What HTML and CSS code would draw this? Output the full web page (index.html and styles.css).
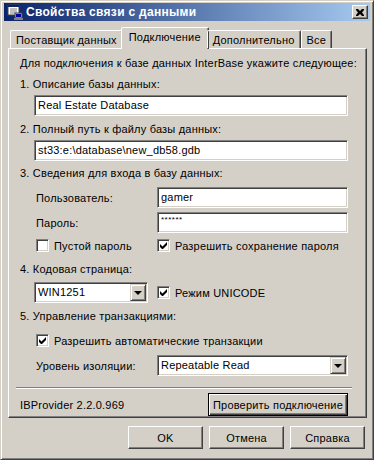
FILE: index.html
```html
<!DOCTYPE html>
<html lang="ru">
<head>
    <meta charset="UTF-8">
    <title>Свойства связи с данными</title>
    <link rel="stylesheet" href="styles.css">
</head>
<body>
    <div class="window">
        <div class="titlebar">
            <svg class="app-icon" width="16" height="16" viewBox="0 0 16 16">
                <rect x="1" y="1" width="11" height="10" fill="#fff" stroke="#404040"/>
                <rect x="1" y="1" width="11" height="2" fill="#0a246a"/>
                <line x1="3" y1="5" x2="10" y2="5" stroke="#808080"/>
                <line x1="3" y1="7" x2="10" y2="7" stroke="#808080"/>
                <line x1="3" y1="9" x2="10" y2="9" stroke="#808080"/>
                <rect x="8" y="9" width="7" height="5" fill="#c0c0c0" stroke="#404040"/>
                <rect x="9" y="10" width="5" height="3" fill="#0000a0"/>
                <rect x="7" y="14" width="9" height="2" fill="#808080"/>
            </svg>
            <span class="title">Свойства связи с данными</span>
            <div class="close-btn">
                <svg width="8" height="7" viewBox="0 0 8 7">
                    <path d="M0 0h2l2 2 2-2h2v1l-2 2.5 2 2.5v1h-2l-2-2-2 2h-2v-1l2-2.5-2-2.5z" fill="#000"/>
                </svg>
            </div>
        </div>

        <div class="tabs">
            <div class="tab">Поставщик данных</div>
            <div class="tab active">Подключение</div>
            <div class="tab">Дополнительно</div>
            <div class="tab">Все</div>
        </div>

        <div class="panel">
            <div class="intro">Для подключения к базе данных InterBase укажите следующее:</div>

            <div class="label">1. Описание базы данных:</div>
            <div class="field wide">Real Estate Database</div>

            <div class="label after-field">2. Полный путь к файлу базы данных:</div>
            <div class="field wide">st33:e:\database\new_db58.gdb</div>

            <div class="label">3. Сведения для входа в базу данных:</div>
            <div class="row first-row">
                <span class="row-label">Пользователь:</span>
                <div class="field grow">gamer</div>
            </div>
            <div class="row">
                <span class="row-label">Пароль:</span>
                <div class="field grow password">******</div>
            </div>
            <div class="row checks">
                <label class="check col-left"><span class="box"></span>Пустой пароль</label>
                <label class="check"><span class="box checked"></span>Разрешить сохранение пароля</label>
            </div>

            <div class="label after-check">4. Кодовая страница:</div>
            <div class="row codepage">
                <div class="select small">
                    <span class="select-text">WIN1251</span>
                    <span class="arrow"></span>
                </div>
                <label class="check"><span class="box checked"></span>Режим UNICODE</label>
            </div>

            <div class="label after-field">5. Управление транзакциями:</div>
            <div class="row auto-tx">
                <label class="check"><span class="box checked"></span>Разрешить автоматические транзакции</label>
            </div>
            <div class="row isolation">
                <span class="row-label">Уровень изоляции:</span>
                <div class="select grow">
                    <span class="select-text">Repeatable Read</span>
                    <span class="arrow"></span>
                </div>
            </div>

            <div class="separator"></div>

            <div class="footer-row">
                <span class="version">IBProvider 2.2.0.969</span>
                <div class="button test-btn">Проверить подключение</div>
            </div>
        </div>

        <div class="dialog-buttons">
            <div class="button">OK</div>
            <div class="button">Отмена</div>
            <div class="button">Справка</div>
        </div>
    </div>
</body>
</html>
```

FILE: styles.css
```css
body {
    margin: 0;
    background: #d4d0c8;
    font-family: 'Liberation Sans', Arial, sans-serif;
    font-size: 11px;
    letter-spacing: 0.2px;
    color: #000;
}
.window {
    width: 374px;
    height: 460px;
    box-sizing: border-box;
    background: #d4d0c8;
    border: 1px solid;
    border-color: #d4d0c8 #404040 #404040 #d4d0c8;
    box-shadow: inset 1px 1px 0 #fff, inset -1px -1px 0 #808080;
    padding: 2px 3px;
}
.titlebar {
    height: 18px;
    display: flex;
    align-items: center;
    background: linear-gradient(to right, #0a246a, #a6caf0);
    padding: 0 2px 0 3px;
}
.app-icon {
    flex: none;
}
.title {
    color: #fff;
    font-weight: bold;
    font-size: 12px;
    letter-spacing: 0.3px;
    margin-left: 3px;
    flex: 1;
}
.close-btn {
    width: 16px;
    height: 14px;
    box-sizing: border-box;
    background: #d4d0c8;
    border: 1px solid;
    border-color: #fff #404040 #404040 #fff;
    box-shadow: inset -1px -1px 0 #808080;
    display: flex;
    align-items: center;
    justify-content: center;
}
.tabs {
    display: flex;
    align-items: flex-end;
    margin-top: 6px;
    padding-left: 6px;
    height: 21px;
    position: relative;
    z-index: 1;
}
.tab {
    height: 18px;
    box-sizing: border-box;
    padding: 2px 5px 0;
    border: 1px solid;
    border-bottom: none;
    border-color: #fff #404040 transparent #fff;
    box-shadow: inset -1px 0 0 #808080;
    border-radius: 2px 2px 0 0;
    white-space: nowrap;
    line-height: 15px;
}
.tab.active {
    padding: 2px 7px 0;
    margin: 0 -2px -1px;
    background: #d4d0c8;
    height: 22px;
}
.panel {
    height: 370px;
    box-sizing: border-box;
    margin-left: 4px;
    margin-right: 3px;
    border: 1px solid;
    border-color: #fff #404040 #404040 #fff;
    box-shadow: inset -1px -1px 0 #808080;
    padding: 6px 18px 0 11px;
}
.intro {
    height: 17px;
    line-height: 17px;
    white-space: nowrap;
}
.label {
    height: 17px;
    line-height: 17px;
    margin-top: 4px;
    white-space: nowrap;
}
.label.after-field {
    margin-top: 5px;
}
.label.after-check {
    margin-top: 7px;
}
.field, .select {
    height: 21px;
    box-sizing: border-box;
    background: #fff;
    border: 1px solid;
    border-color: #808080 #fff #fff #808080;
    box-shadow: inset 1px 1px 0 #404040, inset -1px -1px 0 #d4d0c8;
    padding: 0 3px;
    line-height: 19px;
    white-space: nowrap;
    overflow: hidden;
}
.field.wide {
    margin: 2px 0 0 14px;
}
.row {
    display: flex;
    align-items: center;
    margin-left: 16px;
    margin-top: 4px;
}
.row.first-row {
    margin-top: 5px;
}
.row-label {
    width: 121px;
    flex: none;
}
.grow {
    flex: 1;
}
.password {
    font-size: 8px;
    line-height: 14px;
    letter-spacing: 0.5px;
}
.checks {
    height: 17px;
}
.check {
    display: flex;
    align-items: center;
    white-space: nowrap;
}
.col-left {
    width: 121px;
}
.box {
    width: 13px;
    height: 13px;
    box-sizing: border-box;
    background: #fff;
    border: 1px solid;
    border-color: #808080 #fff #fff #808080;
    box-shadow: inset 1px 1px 0 #404040, inset -1px -1px 0 #d4d0c8;
    margin-right: 5px;
    flex: none;
    position: relative;
}
.box.checked::after {
    content: "";
    position: absolute;
    left: 2px;
    top: 2px;
    width: 7px;
    height: 7px;
    background: url("data:image/svg+xml,%3Csvg xmlns='http://www.w3.org/2000/svg' width='7' height='7'%3E%3Cpath d='M0 2v3l2 2h1l4-4V0L2.5 4.5z' fill='%23000'/%3E%3C/svg%3E") no-repeat;
}
.codepage {
    margin-left: 14px;
}
.select {
    display: flex;
    align-items: center;
    padding: 0 2px 0 3px;
}
.select.small {
    width: 114px;
    margin-right: 9px;
}
.select-text {
    flex: 1;
}
.arrow {
    width: 16px;
    height: 17px;
    box-sizing: border-box;
    background: #d4d0c8;
    border: 1px solid;
    border-color: #d4d0c8 #404040 #404040 #d4d0c8;
    box-shadow: inset 1px 1px 0 #fff, inset -1px -1px 0 #808080;
    position: relative;
    flex: none;
    margin-right: -1px;
}
.arrow::after {
    content: "";
    position: absolute;
    left: 3px;
    top: 6px;
    border: 4px solid transparent;
    border-top: 4px solid #000;
    border-bottom: none;
}
.auto-tx {
    margin-top: 7px;
    height: 17px;
}
.isolation {
    margin-top: 6px;
}
.separator {
    margin: 11px -4px 0 -4px;
    height: 0;
    border-top: 1px solid #808080;
    border-bottom: 1px solid #fff;
}
.footer-row {
    display: flex;
    align-items: center;
    justify-content: space-between;
    margin-top: 4px;
}
.button {
    height: 23px;
    box-sizing: border-box;
    background: #d4d0c8;
    border: 1px solid;
    border-color: #fff #404040 #404040 #fff;
    box-shadow: inset -1px -1px 0 #808080;
    display: flex;
    align-items: center;
    justify-content: center;
    white-space: nowrap;
}
.test-btn {
    width: 140px;
    border-color: #000;
    box-shadow: inset 1px 1px 0 #fff, inset -1px -1px 0 #404040, inset -2px -2px 0 #808080;
}
.dialog-buttons {
    display: flex;
    justify-content: flex-end;
    gap: 6px;
    margin-top: 8px;
    padding-right: 5px;
}
.dialog-buttons .button {
    width: 75px;
}
```
